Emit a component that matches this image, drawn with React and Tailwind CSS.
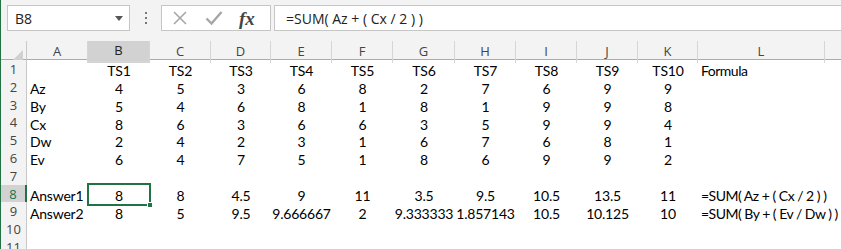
import React from 'react';

const COLS = ['A', 'B', 'C', 'D', 'E', 'F', 'G', 'H', 'I', 'J', 'K', 'L', ''];

const ROWS = [
  ['', 'TS1', 'TS2', 'TS3', 'TS4', 'TS5', 'TS6', 'TS7', 'TS8', 'TS9', 'TS10', 'Formula'],
  ['Az', '4', '5', '3', '6', '8', '2', '7', '6', '9', '9', ''],
  ['By', '5', '4', '6', '8', '1', '8', '1', '9', '9', '8', ''],
  ['Cx', '8', '6', '3', '6', '6', '3', '5', '9', '9', '4', ''],
  ['Dw', '2', '4', '2', '3', '1', '6', '7', '6', '8', '1', ''],
  ['Ev', '6', '4', '7', '5', '1', '8', '6', '9', '9', '2', ''],
  ['', '', '', '', '', '', '', '', '', '', '', ''],
  ['Answer1', '8', '8', '4.5', '9', '11', '3.5', '9.5', '10.5', '13.5', '11', '=SUM( Az + ( Cx / 2 ) )'],
  ['Answer2', '8', '5', '9.5', '9.666667', '2', '9.333333', '1.857143', '10.5', '10.125', '10', '=SUM( By + ( Ev / Dw ) )'],
  ['', '', '', '', '', '', '', '', '', '', '', ''],
  ['', '', '', '', '', '', '', '', '', '', '', ''],
];

const gridCols = 'grid grid-cols-[26px_61px_62px_61px_60px_61px_61px_62px_61px_61px_61px_60px_127px_16px]';

export default function App() {
  return (
    <div className="w-[841px] h-[249px] overflow-hidden bg-white border-l border-[#217346] font-['Lato',sans-serif] text-black">
      {/* Formula bar */}
      <div className="h-[41px] bg-[#f3f3f3] flex items-start pt-[5px] pl-[6px]">
        <div className="w-[123px] h-[26px] bg-white border border-[#c6c6c6] flex items-center justify-between pl-[7px] pr-[6px]">
          <span className="font-['Open_Sans',sans-serif] text-[14px] text-[#222]">B8</span>
          <svg width="8" height="5" viewBox="0 0 8 5"><path d="M0 0h8L4 5z" fill="#555" /></svg>
        </div>
        <div className="w-[31px] h-[26px] flex flex-col items-center justify-center gap-[3px]">
          <span className="w-[2px] h-[2px] bg-[#777]" />
          <span className="w-[2px] h-[2px] bg-[#777]" />
          <span className="w-[2px] h-[2px] bg-[#777]" />
        </div>
        <div className="w-[110px] h-[26px] bg-white border border-[#c6c6c6] flex items-center">
          <svg className="ml-[10px]" width="16" height="16" viewBox="0 0 16 16">
            <path d="M2 2L14 14M14 2L2 14" stroke="#a6a6a6" strokeWidth="1.6" fill="none" />
          </svg>
          <svg className="ml-[17px]" width="18" height="16" viewBox="0 0 18 16">
            <path d="M1.5 8.5L6.5 13.5L16.5 2" stroke="#a6a6a6" strokeWidth="2.4" fill="none" />
          </svg>
          <span className="ml-[16px] font-['Liberation_Serif',serif] italic text-[19px] leading-none text-[#444] font-bold">fx</span>
        </div>
        <div className="ml-[3px] flex-1 h-[26px] bg-white border border-[#c6c6c6] border-r-0 flex items-center pl-[11px]">
          <span className="font-['Open_Sans',sans-serif] text-[14px] text-[#222]">=SUM( Az + ( Cx / 2 ) )</span>
        </div>
      </div>

      {/* Column headers */}
      <div className={`${gridCols} h-[19px] bg-[#f3f3f3] border-b border-[#ababab]`}>
        <div className="border-r border-[#c8c8c8] flex items-end justify-end pr-[3px] pb-[3px]">
          <svg width="10" height="10" viewBox="0 0 10 10"><path d="M10 0V10H0z" fill="#d0d0d0" /></svg>
        </div>
        {COLS.map((c, i) => (
          <div
            key={i}
            className={`flex items-center justify-center font-['Open_Sans',sans-serif] text-[13px] ${
              c === 'B' ? 'bg-[#d2d2d2] border-b-2 border-[#217346] text-[#222]' : 'text-[#444]'
            } ${i < COLS.length - 1 ? 'border-r border-[#d5d5d5]' : ''}`}
          >
            {c}
          </div>
        ))}
      </div>

      {/* Body */}
      {ROWS.map((row, r) => {
        const sel = r === 7;
        return (
          <div key={r} className={`${gridCols} h-[17.8px]`}>
            <div
              className={`flex items-center justify-center font-['Open_Sans',sans-serif] text-[13px] border-b border-[#d5d5d5] ${
                sel ? 'bg-[#d2d2d2] border-r-2 border-r-[#217346] text-[#217346]' : 'bg-[#f3f3f3] border-r border-r-[#c8c8c8] text-[#444]'
              }`}
            >
              {r + 1}
            </div>
            {row.map((v, c) => (
              <div
                key={c}
                className={`relative flex items-center text-[14px] leading-none whitespace-nowrap ${
                  c === 0 ? 'justify-start pl-[3px] tracking-[-0.2px]' : c === 11 ? 'justify-start pl-[3px] tracking-[-0.5px]' : 'justify-center tracking-[-0.2px]'
                }`}
              >
                {sel && c === 1 && (
                  <div className="absolute -left-[1px] -top-[2px] -right-[1px] -bottom-[1px] border-2 border-[#217346]">
                    <div className="absolute -right-[4px] -bottom-[4px] w-[6px] h-[6px] bg-[#217346] border border-white" />
                  </div>
                )}
                <span className="relative pt-[2px]">{v}</span>
              </div>
            ))}
            <div />
          </div>
        );
      })}
    </div>
  );
}
